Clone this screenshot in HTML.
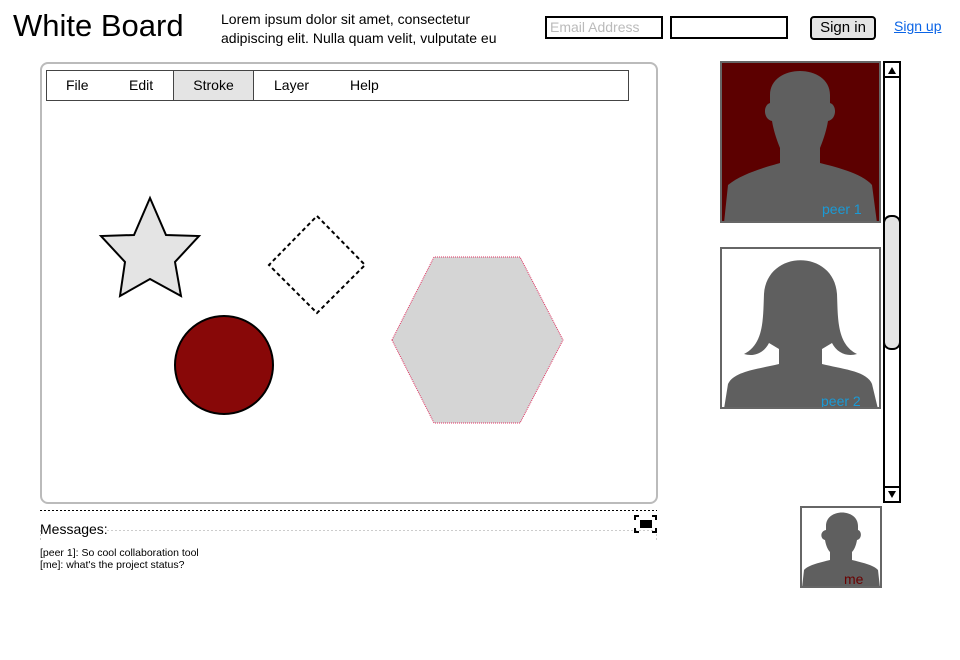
<!DOCTYPE html>
<html><head><meta charset="utf-8"><style>
body{margin:0;width:960px;height:660px;background:#fff;font-family:"Liberation Sans",sans-serif;position:relative;overflow:hidden}
.a{position:absolute}
</style></head><body>
<div class="a" style="left:13px;top:8px;font-size:31px;color:#000">White Board</div>
<div class="a" style="left:221px;top:10px;font-size:14px;line-height:19px;width:300px;height:38px;overflow:hidden">Lorem ipsum dolor sit amet, consectetur adipiscing elit. Nulla quam velit, vulputate eu</div>
<div class="a" style="left:545px;top:16px;width:111px;height:19px;border:2px solid #000;font-size:14px;color:#bbb;line-height:19px;padding-left:3px">Email Address</div>
<div class="a" style="left:670px;top:16px;width:114px;height:19px;border:2px solid #000"></div>
<div class="a" style="left:810px;top:16px;width:62px;height:20px;border:2px solid #000;border-radius:4px;background:#e4e4e4;font-size:15px;text-align:center;line-height:20px">Sign in</div>
<div class="a" style="left:894px;top:18px;font-size:14px;color:#0a64e6;text-decoration:underline">Sign up</div>

<div class="a" style="left:40px;top:62px;width:614px;height:438px;border:2px solid #bbb;border-radius:8px"></div>
<div class="a" style="left:46px;top:70px;width:581px;height:29px;border:1px solid #444;font-size:14px;line-height:29px">
<span class="a" style="left:19px">File</span>
<span class="a" style="left:82px">Edit</span>
<span class="a" style="left:126px;width:79px;height:29px;background:#e4e4e4;border-left:1px solid #444;border-right:1px solid #444;text-align:center">Stroke</span>
<span class="a" style="left:227px">Layer</span>
<span class="a" style="left:303px">Help</span>
</div>
<svg class="a" style="left:0;top:0" width="700" height="660">
<polygon points="150,198 166,235 199,236 175,262 181,296 150,279 120,296 125,262 101,236 134,235" fill="#e4e4e4" stroke="#000" stroke-width="2"/>
<polygon points="317,216 365,265 317,313 269,265" fill="none" stroke="#000" stroke-width="2" stroke-dasharray="4,3"/>
<circle cx="224" cy="365" r="49" fill="#880808" stroke="#000" stroke-width="2"/>
<polygon points="392,340 434,257 520,257 563,340 520,423 434,423" fill="#d5d5d5" stroke="#e03060" stroke-width="1" stroke-dasharray="1,1"/>
<line x1="40" y1="510.5" x2="657" y2="510.5" stroke="#000" stroke-dasharray="2,2"/>
<line x1="107" y1="530.5" x2="657" y2="530.5" stroke="#ccc" stroke-dasharray="2,2"/>
<line x1="40.5" y1="530" x2="40.5" y2="542" stroke="#ccc" stroke-dasharray="2,2"/>
<line x1="656.5" y1="530" x2="656.5" y2="542" stroke="#ccc" stroke-dasharray="2,2"/>
<path d="M635,520v-4h4M652,516h4v4M635,528v4h4M652,532h4v-4" fill="none" stroke="#000" stroke-width="2"/>
<rect x="640" y="520" width="12" height="8" fill="#000"/>
</svg>
<div class="a" style="left:40px;top:521px;font-size:14px">Messages:</div>
<div class="a" style="left:40px;top:547px;font-size:10.5px;line-height:12px">[peer 1]: So cool collaboration tool<br>[me]: what's the project status?</div>

<div class="a" style="left:720px;top:61px;width:157px;height:158px;border:2px solid #666;background:#5c0000;overflow:hidden">
<svg width="157" height="158"><path d="M48,32 C48,0 108,0 108,32 L108,40 C115,42 115,56 106,58 C104,70 100,80 98,85 L98,100 C110,103 140,110 150,122 L155,160 L2,160 L6,122 C20,110 48,103 58,100 L58,85 C56,80 52,70 50,58 C41,56 41,42 48,40 Z" fill="#5f5f5f"/>
<text x="100" y="151" font-size="14" fill="#1a9ad6" font-family="Liberation Sans">peer 1</text></svg></div>
<div class="a" style="left:720px;top:247px;width:157px;height:158px;border:2px solid #666;background:#fff;overflow:hidden">
<svg width="157" height="158"><path d="M42,45 C45,0 112,0 115,45 C116,70 115,95 135,105 C125,108 115,104 110,94 L100,100 L100,115 C120,120 145,122 150,135 L156,160 L2,160 L6,135 C12,122 37,120 57,115 L57,100 L47,94 C42,104 32,108 22,105 C42,95 41,70 42,45 Z" fill="#5f5f5f"/>
<text x="99" y="157" font-size="14" fill="#1a9ad6" font-family="Liberation Sans">peer 2</text></svg></div>
<div class="a" style="left:883px;top:61px;width:14px;height:438px;border:2px solid #000;background:#fff"></div>
<svg class="a" style="left:885px;top:63px" width="14" height="438">
<line x1="0" y1="14" x2="14" y2="14" stroke="#000" stroke-width="2"/>
<polygon points="3,11 11,11 7,4" fill="#000"/>
<line x1="0" y1="424" x2="14" y2="424" stroke="#000" stroke-width="2"/>
<polygon points="3,428 11,428 7,435" fill="#000"/>
</svg>
<div class="a" style="left:883px;top:215px;width:14px;height:131px;border:2px solid #000;border-radius:8px;background:#e4e4e4"></div>
<div class="a" style="left:800px;top:506px;width:78px;height:78px;border:2px solid #666;background:#fff;overflow:hidden">
<svg width="78" height="78"><path d="M24,18 C24,0 56,0 56,18 L56,22 C60,23 60,31 55,32 C54,38 52,42 50,44 L50,52 C58,54 72,57 76,62 L78,80 L0,80 L2,62 C6,57 20,54 28,52 L28,44 C26,42 24,38 23,32 C18,31 18,23 24,22 Z" fill="#5f5f5f"/>
<text x="42" y="76" font-size="14" fill="#6a0000" font-family="Liberation Sans">me</text></svg></div>
</body></html>
